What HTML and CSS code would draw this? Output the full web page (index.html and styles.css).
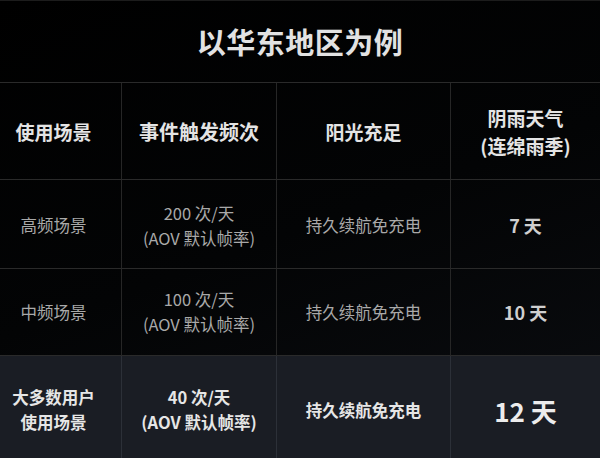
FILE: index.html
```html
<!DOCTYPE html>
<html lang="zh">
<head>
<meta charset="utf-8">
<link rel="stylesheet" href="styles.css">
</head>
<body>
<div class="page">
  <div class="title">以华东地区为例</div>
  <div class="table">
    <div class="cell head c1">使用场景</div>
    <div class="cell head c2">事件触发频次</div>
    <div class="cell head c3">阳光充足</div>
    <div class="cell head c4">阴雨天气<br>(连绵雨季)</div>

    <div class="cell body c1 r1">高频场景</div>
    <div class="cell body c2 r1">200 次/天<br>(AOV 默认帧率)</div>
    <div class="cell body c3 r1">持久续航免充电</div>
    <div class="cell body c4 r1 days">7 天</div>

    <div class="cell body c1 r2">中频场景</div>
    <div class="cell body c2 r2">100 次/天<br>(AOV 默认帧率)</div>
    <div class="cell body c3 r2">持久续航免充电</div>
    <div class="cell body c4 r2 days">10 天</div>

    <div class="cell hl c1">大多数用户<br>使用场景</div>
    <div class="cell hl c2">40 次/天<br>(AOV 默认帧率)</div>
    <div class="cell hl c3">持久续航免充电</div>
    <div class="cell hl c4 big">12 天</div>
  </div>
</div>
</body>
</html>
```

FILE: styles.css
```css
* { box-sizing: border-box; }
html, body {
  margin: 0;
  padding: 0;
  background: #000;
}
body {
  width: 600px;
  height: 458px;
  overflow: hidden;
  font-family: "Noto Sans CJK SC", "Noto Sans", sans-serif;
}
.page {
  width: 600px;
  height: 458px;
  background: linear-gradient(160deg, #000 0%, #030405 50%, #0b0d11 100%);
  border-top: 1px solid #1c1c1c;
}
.title {
  height: 82px;
  display: flex;
  align-items: center;
  justify-content: center;
  color: #e2e2e2;
  font-size: 29px;
  font-weight: 700;
  letter-spacing: 0.5px;
  padding-bottom: 2px;
  border-bottom: 1px solid #2a2a2a;
}
.table {
  display: grid;
  grid-template-columns: 122px 155px 174px 149px;
  grid-template-rows: 97px 89px 87px 110px;
}
.cell {
  display: flex;
  align-items: center;
  justify-content: center;
  text-align: center;
  border-right: 1px solid #262626;
  border-bottom: 1px solid #2a2a2a;
}
.c4 { border-right: none; }
.c1 { padding-right: 14px; }
.head {
  color: #e4e4e4;
  font-size: 19px;
  font-weight: 700;
  line-height: 28px;
  padding-top: 2px;
}
.head.c2 { font-size: 20px; }
.body {
  color: #a9a9a9;
  font-size: 16.5px;
  line-height: 25px;
}
.body.r1 { padding-top: 3px; }
.body.days {
  color: #cfcfcf;
  font-weight: 700;
  font-size: 18px;
}
.hl {
  background: #1a1d24;
  color: #e6e6e6;
  font-weight: 700;
  font-size: 16.5px;
  line-height: 25px;
  border-right-color: #2c3038;
  border-bottom: none;
  padding-bottom: 2px;
}
.hl.c1 { padding-right: 14px; }
.hl.big {
  font-size: 26px;
  color: #ececec;
}
```
